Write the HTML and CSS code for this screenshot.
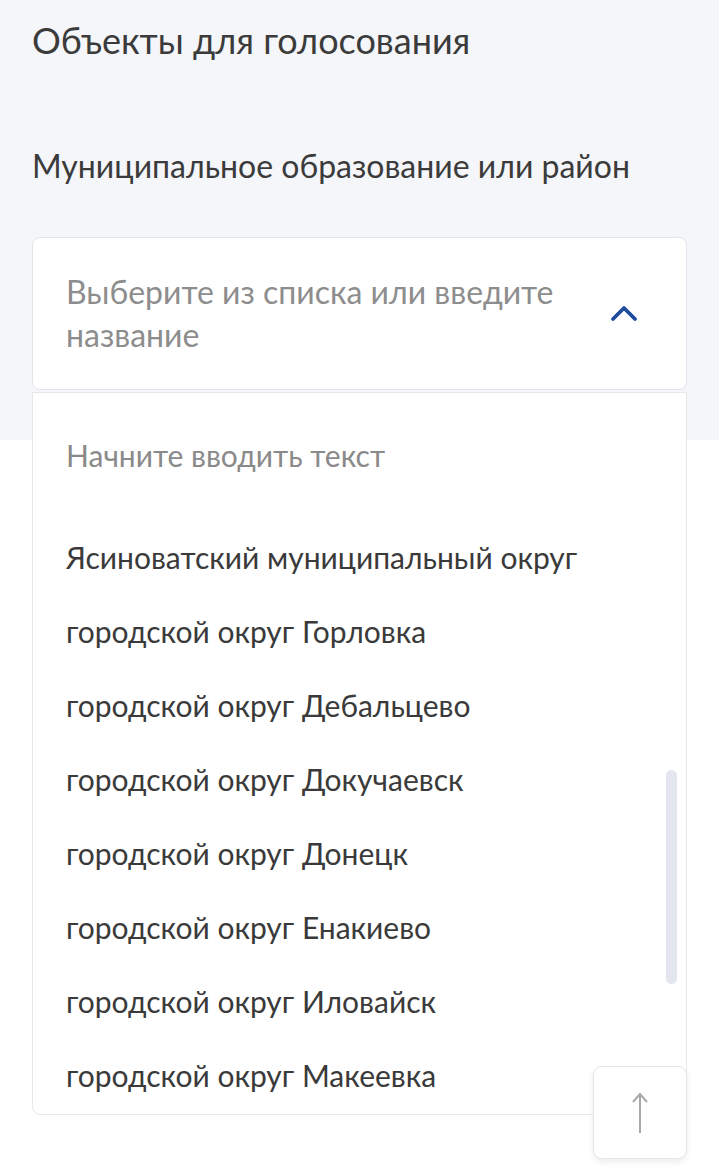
FILE: index.html
```html
<!DOCTYPE html>
<html lang="ru">
  <head>
    <meta charset="utf-8">
    <title>Объекты для голосования</title>
    <link rel="stylesheet" href="styles.css">
  </head>
  <body>
    <section class="vote-objects">
      <h2 class="section-title">Объекты для голосования</h2>

      <div class="field">
        <div class="field-label">Муниципальное образование или район</div>

        <div class="select">
          <div class="select-control">
            <span class="select-placeholder">Выберите из списка или введите название</span>
            <svg class="select-arrow" width="28" height="18" viewBox="0 0 28 18">
              <path d="M3 15 L14 4 L25 15" fill="none" stroke="#1d4b9e" stroke-width="3.8" stroke-linecap="round" stroke-linejoin="round"/>
            </svg>
          </div>

          <div class="select-menu">
            <div class="select-search">Начните вводить текст</div>
            <ul class="select-options">
              <li>Ясиноватский муниципальный округ</li>
              <li>городской округ Горловка</li>
              <li>городской округ Дебальцево</li>
              <li>городской округ Докучаевск</li>
              <li>городской округ Донецк</li>
              <li>городской округ Енакиево</li>
              <li>городской округ Иловайск</li>
              <li>городской округ Макеевка</li>
            </ul>
            <div class="select-scrollbar"></div>
          </div>
        </div>
      </div>
    </section>

    <button class="scroll-top" type="button" aria-label="Наверх">
      <svg width="20" height="44" viewBox="0 0 20 44">
        <path d="M10 3 L10 42 M3 11 L10 3 L17 11" fill="none" stroke="#a8a8a8" stroke-width="2"/>
      </svg>
    </button>
  </body>
</html>
```

FILE: styles.css
```css
body {
  margin: 0;
  font-family: Lato, "Noto Sans", sans-serif;
  color: #3a3a3a;
  background: #fff;
}

/* grey band behind the heading and the field, the list runs past it */
.vote-objects {
  background: linear-gradient(to bottom, #f5f6fa 440px, #fff 440px);
  padding: 20px 32px 60px;
}

.section-title {
  margin: 0;
  font-size: 36px;
  font-weight: 400;
  line-height: 40px;
  color: #3b3b3b;
}

.field {
  margin-top: 86px;
}

.field-label {
  font-size: 32px;
  line-height: 40px;
  color: #3b3b3b;
}

.select {
  margin-top: 51px;
}

.select-control {
  display: flex;
  align-items: center;
  gap: 30px;
  height: 153px;
  box-sizing: border-box;
  padding: 0 48px 2px 33px;
  background: #fff;
  border: 1px solid #e3e5ea;
  border-radius: 8px;
}

.select-placeholder {
  flex: 1;
  font-size: 32px;
  line-height: 43px;
  color: #8d8d8d;
}

.select-arrow {
  flex-shrink: 0;
}

.select-menu {
  position: relative;
  margin-top: 2px;
  height: 723px;
  box-sizing: border-box;
  padding: 42px 33px 0;
  background: #fff;
  border: 1px solid #e6e7eb;
  border-radius: 0 0 8px 8px;
  overflow: hidden;
}

.select-search {
  font-size: 30px;
  line-height: 40px;
  color: #8a8a8a;
}

.select-options {
  list-style: none;
  margin: 62px 0 0;
  padding: 0;
}

.select-options li {
  font-size: 30px;
  line-height: 40px;
  padding-bottom: 34px;
  color: #3a3a3a;
}

.select-scrollbar {
  position: absolute;
  right: 9px;
  top: 377px;
  width: 11px;
  height: 214px;
  border-radius: 6px;
  background: #e3e6ef;
}

.scroll-top {
  position: fixed;
  right: 32px;
  bottom: 15px;
  width: 94px;
  height: 93px;
  display: flex;
  align-items: center;
  justify-content: center;
  padding: 0;
  background: #fff;
  border: 1px solid #e4e5e9;
  border-radius: 9px;
  box-shadow: 0 3px 6px rgba(0, 0, 0, 0.08);
  cursor: pointer;
}
```
